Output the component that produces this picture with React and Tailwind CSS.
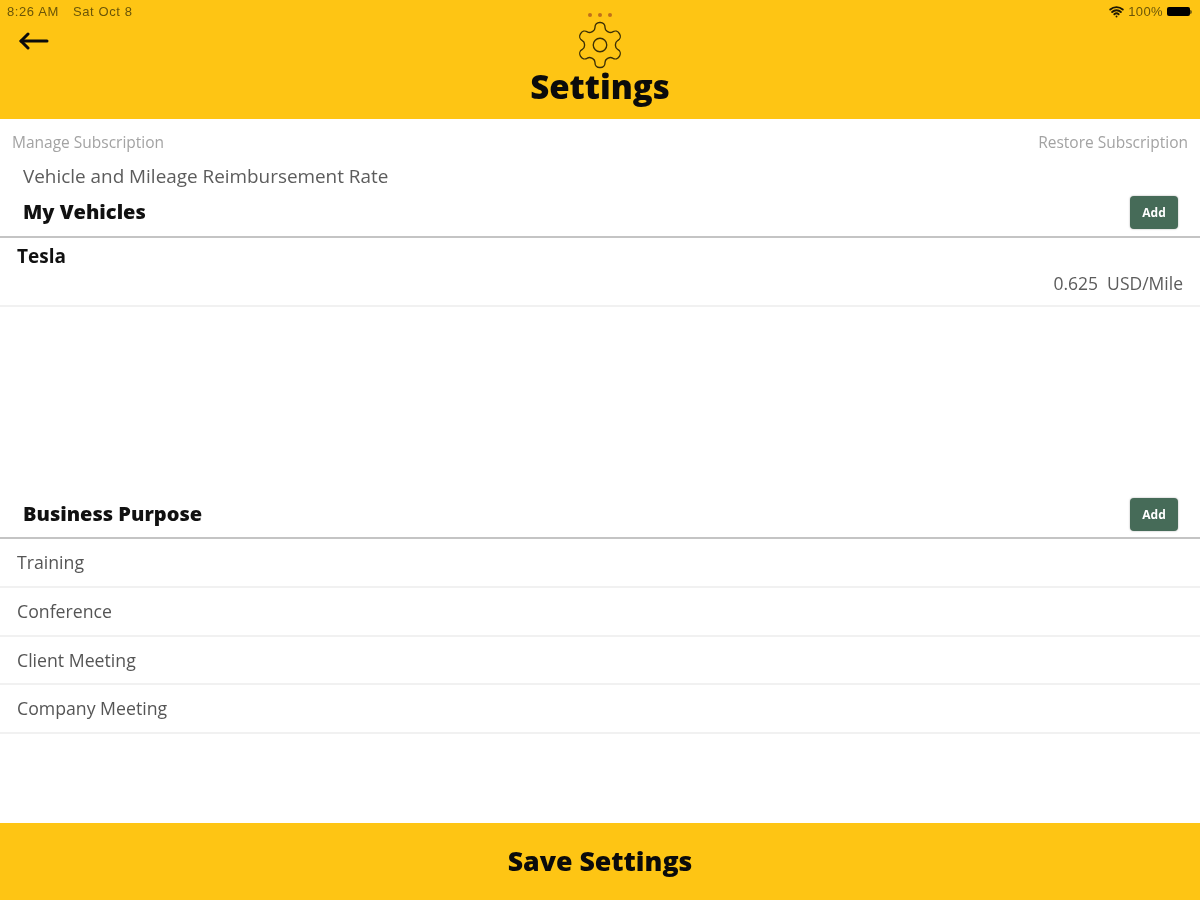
import React from "react";
import { Wifi } from "lucide-react";

function GearIcon() {
  return (
    <svg width="54" height="54" viewBox="0 0 24 24" fill="none" stroke="#3a2f06" strokeWidth="0.6" strokeLinecap="round" strokeLinejoin="round">
      <path d="M12.22 2h-.44a2 2 0 0 0-2 2v.18a2 2 0 0 1-1 1.73l-.43.25a2 2 0 0 1-2 0l-.15-.08a2 2 0 0 0-2.73.73l-.22.38a2 2 0 0 0 .73 2.73l.15.1a2 2 0 0 1 1 1.72v.51a2 2 0 0 1-1 1.74l-.15.09a2 2 0 0 0-.73 2.73l.22.38a2 2 0 0 0 2.73.73l.15-.08a2 2 0 0 1 2 0l.43.25a2 2 0 0 1 1 1.73V20a2 2 0 0 0 2 2h.44a2 2 0 0 0 2-2v-.18a2 2 0 0 1 1-1.73l.43-.25a2 2 0 0 1 2 0l.15.08a2 2 0 0 0 2.73-.73l.22-.39a2 2 0 0 0-.73-2.73l-.15-.08a2 2 0 0 1-1-1.74v-.5a2 2 0 0 1 1-1.74l.15-.09a2 2 0 0 0 .73-2.73l-.22-.38a2 2 0 0 0-2.73-.73l-.15.08a2 2 0 0 1-2 0l-.43-.25a2 2 0 0 1-1-1.73V4a2 2 0 0 0-2-2z" />
      <circle cx="12" cy="12" r="3" />
    </svg>
  );
}

function BackArrow() {
  return (
    <svg width="30" height="20" viewBox="0 0 30 20" fill="none" stroke="#0b0b0b" strokeWidth="3" strokeLinecap="round" strokeLinejoin="round">
      <path d="M2 10h26" />
      <path d="M9 3l-7 7 7 7" />
    </svg>
  );
}

function Battery() {
  return (
    <div className="flex items-center">
      <div className="h-[9px] w-[23px] rounded-[2px] bg-black" />
      <div className="h-[4px] w-[2px] rounded-r-sm bg-[#7a6110]" />
    </div>
  );
}

function SectionHeader({ title, height }) {
  return (
    <div className={`flex items-start justify-between border-b-2 border-[#c4c4c4] pl-[23px] pr-[22px] ${height}`}>
      <h2 className="mt-[3px] text-[20px] leading-[28px] font-extrabold text-[#111]">{title}</h2>
      <button className="mt-[1px] flex h-[33px] w-[48px] items-center justify-center rounded-[4px] bg-[#466b58] text-[12px] font-bold text-white shadow-[0_0_2px_rgba(0,0,0,0.35)]">
        Add
      </button>
    </div>
  );
}

function PurposeRow({ label }) {
  return (
    <div className="flex h-[48.75px] items-center border-b-2 border-[#f1f1f1] pl-[17px] text-[17.7px] text-[#555]">
      {label}
    </div>
  );
}

export default function App() {
  const purposes = ["Training", "Conference", "Client Meeting", "Company Meeting"];

  return (
    <div className="flex h-[900px] flex-col bg-white font-['Open_Sans',sans-serif] blur-[0.5px]">
      <header className="h-[119px] bg-[#fec514]">
        <div className="grid h-[23px] grid-cols-[1fr_auto_1fr] items-center pl-[7px] pr-[8px] font-['Liberation_Sans',sans-serif] text-[13px] text-[#6a5508]">
          <div className="flex gap-[14px] tracking-[0.6px]">
            <span>8:26 AM</span>
            <span>Sat Oct 8</span>
          </div>
          <div className="flex gap-[6px] pt-[7px]">
            <span className="h-[4px] w-[4px] rounded-full bg-[#c0711a]" />
            <span className="h-[4px] w-[4px] rounded-full bg-[#c0711a]" />
            <span className="h-[4px] w-[4px] rounded-full bg-[#c0711a]" />
          </div>
          <div className="flex items-center justify-end gap-[4px]">
            <Wifi size={15} strokeWidth={3} className="text-[#1d1703]" />
            <span className="tracking-[0.4px]">100%</span>
            <Battery />
          </div>
        </div>
        <div className="grid grid-cols-[1fr_auto_1fr]">
          <div className="pl-[19px] pt-[8px]">
            <BackArrow />
          </div>
          <div className="-mt-[5px] flex flex-col items-center">
            <GearIcon />
            <h1 className="-mt-[3px] text-[33px] leading-[36px] font-extrabold text-[#0b0b0b]">Settings</h1>
          </div>
        </div>
      </header>

      <div className="flex justify-between px-[12px] pt-[13px] text-[15.5px] leading-[20px] text-[#a3a3a3]">
        <span>Manage Subscription</span>
        <span>Restore Subscription</span>
      </div>
      <p className="pl-[23px] pt-[12px] text-[18.9px] leading-[25px] text-[#5c5c5c]">Vehicle and Mileage Reimbursement Rate</p>

      <div className="mt-[6px]">
        <SectionHeader title="My Vehicles" height="h-[43px]" />
      </div>
      <div className="h-[69px] border-b-2 border-[#f1f1f1] pl-[17px] pr-[17px] pt-[5px]">
        <div className="text-[19px] leading-[26px] font-bold text-[#111]">Tesla</div>
        <div className="text-right text-[17.5px] leading-[28px] text-[#5c5c5c]">0.625&nbsp; USD/Mile</div>
      </div>

      <div className="mt-[190px]">
        <SectionHeader title="Business Purpose" height="h-[42px]" />
      </div>
      {purposes.map((p) => (
        <PurposeRow key={p} label={p} />
      ))}

      <footer className="mt-auto flex h-[77px] items-center justify-center bg-[#fec514] text-[26.7px] font-extrabold text-[#0b0b0b]">
        Save Settings
      </footer>
    </div>
  );
}
